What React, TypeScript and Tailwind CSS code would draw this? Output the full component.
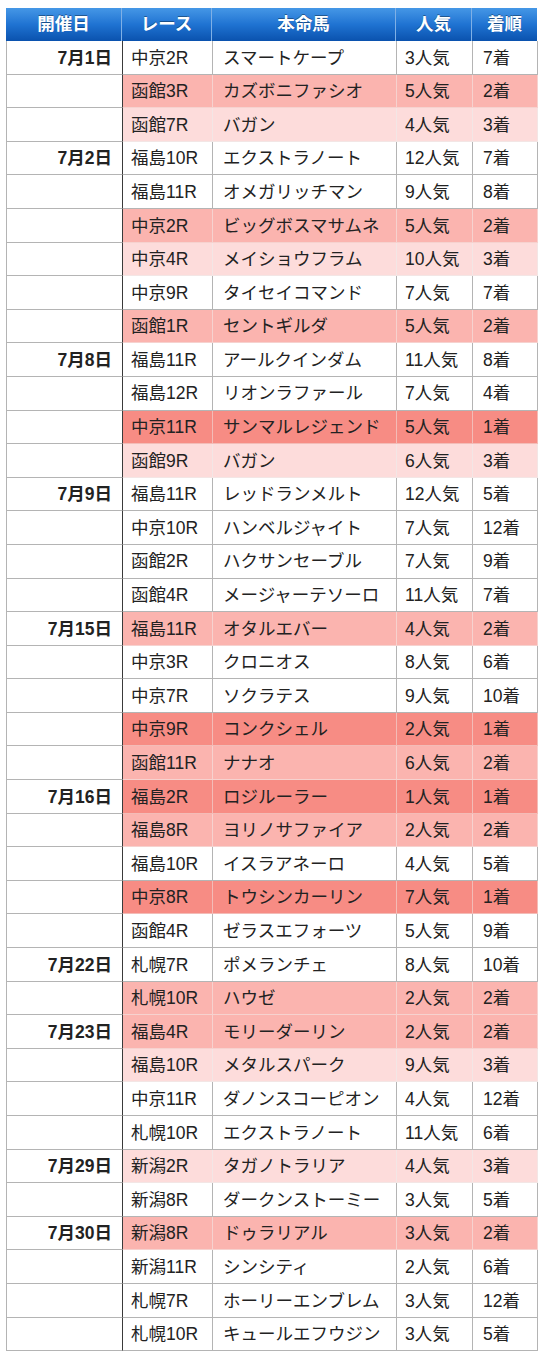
import * as React from "react";

type Row = { date?: string; race: string; horse: string; pop: number; place: number };

const ROWS: Row[] = [
  { date: "7月1日", race: "中京2R", horse: "スマートケープ", pop: 3, place: 7 },
  { race: "函館3R", horse: "カズボニファシオ", pop: 5, place: 2 },
  { race: "函館7R", horse: "バガン", pop: 4, place: 3 },
  { date: "7月2日", race: "福島10R", horse: "エクストラノート", pop: 12, place: 7 },
  { race: "福島11R", horse: "オメガリッチマン", pop: 9, place: 8 },
  { race: "中京2R", horse: "ビッグボスマサムネ", pop: 5, place: 2 },
  { race: "中京4R", horse: "メイショウフラム", pop: 10, place: 3 },
  { race: "中京9R", horse: "タイセイコマンド", pop: 7, place: 7 },
  { race: "函館1R", horse: "セントギルダ", pop: 5, place: 2 },
  { date: "7月8日", race: "福島11R", horse: "アールクインダム", pop: 11, place: 8 },
  { race: "福島12R", horse: "リオンラファール", pop: 7, place: 4 },
  { race: "中京11R", horse: "サンマルレジェンド", pop: 5, place: 1 },
  { race: "函館9R", horse: "バガン", pop: 6, place: 3 },
  { date: "7月9日", race: "福島11R", horse: "レッドランメルト", pop: 12, place: 5 },
  { race: "中京10R", horse: "ハンベルジャイト", pop: 7, place: 12 },
  { race: "函館2R", horse: "ハクサンセーブル", pop: 7, place: 9 },
  { race: "函館4R", horse: "メージャーテソーロ", pop: 11, place: 7 },
  { date: "7月15日", race: "福島11R", horse: "オタルエバー", pop: 4, place: 2 },
  { race: "中京3R", horse: "クロニオス", pop: 8, place: 6 },
  { race: "中京7R", horse: "ソクラテス", pop: 9, place: 10 },
  { race: "中京9R", horse: "コンクシェル", pop: 2, place: 1 },
  { race: "函館11R", horse: "ナナオ", pop: 6, place: 2 },
  { date: "7月16日", race: "福島2R", horse: "ロジルーラー", pop: 1, place: 1 },
  { race: "福島8R", horse: "ヨリノサファイア", pop: 2, place: 2 },
  { race: "福島10R", horse: "イスラアネーロ", pop: 4, place: 5 },
  { race: "中京8R", horse: "トウシンカーリン", pop: 7, place: 1 },
  { race: "函館4R", horse: "ゼラスエフォーツ", pop: 5, place: 9 },
  { date: "7月22日", race: "札幌7R", horse: "ポメランチェ", pop: 8, place: 10 },
  { race: "札幌10R", horse: "ハウゼ", pop: 2, place: 2 },
  { date: "7月23日", race: "福島4R", horse: "モリーダーリン", pop: 2, place: 2 },
  { race: "福島10R", horse: "メタルスパーク", pop: 9, place: 3 },
  { race: "中京11R", horse: "ダノンスコーピオン", pop: 4, place: 12 },
  { race: "札幌10R", horse: "エクストラノート", pop: 11, place: 6 },
  { date: "7月29日", race: "新潟2R", horse: "タガノトラリア", pop: 4, place: 3 },
  { race: "新潟8R", horse: "ダークンストーミー", pop: 3, place: 5 },
  { date: "7月30日", race: "新潟8R", horse: "ドゥラリアル", pop: 3, place: 2 },
  { race: "新潟11R", horse: "シンシティ", pop: 2, place: 6 },
  { race: "札幌7R", horse: "ホーリーエンブレム", pop: 3, place: 12 },
  { race: "札幌10R", horse: "キュールエフウジン", pop: 3, place: 5 },
];

const COLS = "grid grid-cols-[116px_90px_184px_76px_65px]";

// 1〜3着は行を色分け
function rowTone(place: number) {
  if (place === 1) return "bg-[#f78c84] border-[#f3bcb7]";
  if (place === 2) return "bg-[#fbb4af] border-[#f6d2cf]";
  if (place === 3) return "bg-[#fddcdb] border-[#f3e6e5]";
  return "bg-white border-[#b4b4b4]";
}

export default function App() {
  return (
    <div className="min-h-screen bg-white pl-[6px] pt-[8px] text-[#222] font-['Liberation_Sans','Noto_Sans_CJK_JP',sans-serif]">
      <div className="w-[531px]">
        {/* header */}
        <div className={`${COLS} h-[33px] bg-gradient-to-b from-[#4597e6] via-[#1f73d2] to-[#0a52ae] text-[17.5px] font-bold leading-none text-white [text-shadow:0_-1px_0_rgba(0,0,0,0.35)]`}>
          {["開催日", "レース", "本命馬", "人気", "着順"].map((h, i) => (
            <div key={h} className={`flex items-center justify-center pt-[1px] ${i < 4 ? "border-r border-[#7fb0e6]" : ""}`}>
              {h}
            </div>
          ))}
        </div>

        {/* body */}
        <div className="border-l border-[#b4b4b4]">
          {ROWS.map((r, i) => {
            const tone = rowTone(r.place);
            const cell = `flex items-center border-r border-b pt-[2px] ${tone}`;
            return (
              <div key={i} className={`${COLS} h-[33.6px] text-[17.5px] leading-none`}>
                <div className="flex items-center justify-end border-r border-r-[#3a3a3a] border-b border-b-[#b4b4b4] bg-white pr-[10px] pt-[2px] font-bold">
                  {r.date}
                </div>
                <div className={`${cell} pl-[8px]`}>{r.race}</div>
                <div className={`${cell} whitespace-nowrap pl-[10px]`}>{r.horse}</div>
                <div className={`${cell} pl-[8px]`}>{r.pop}人気</div>
                <div className={`${cell} pl-[10px]`}>{r.place}着</div>
              </div>
            );
          })}
        </div>
      </div>
    </div>
  );
}
